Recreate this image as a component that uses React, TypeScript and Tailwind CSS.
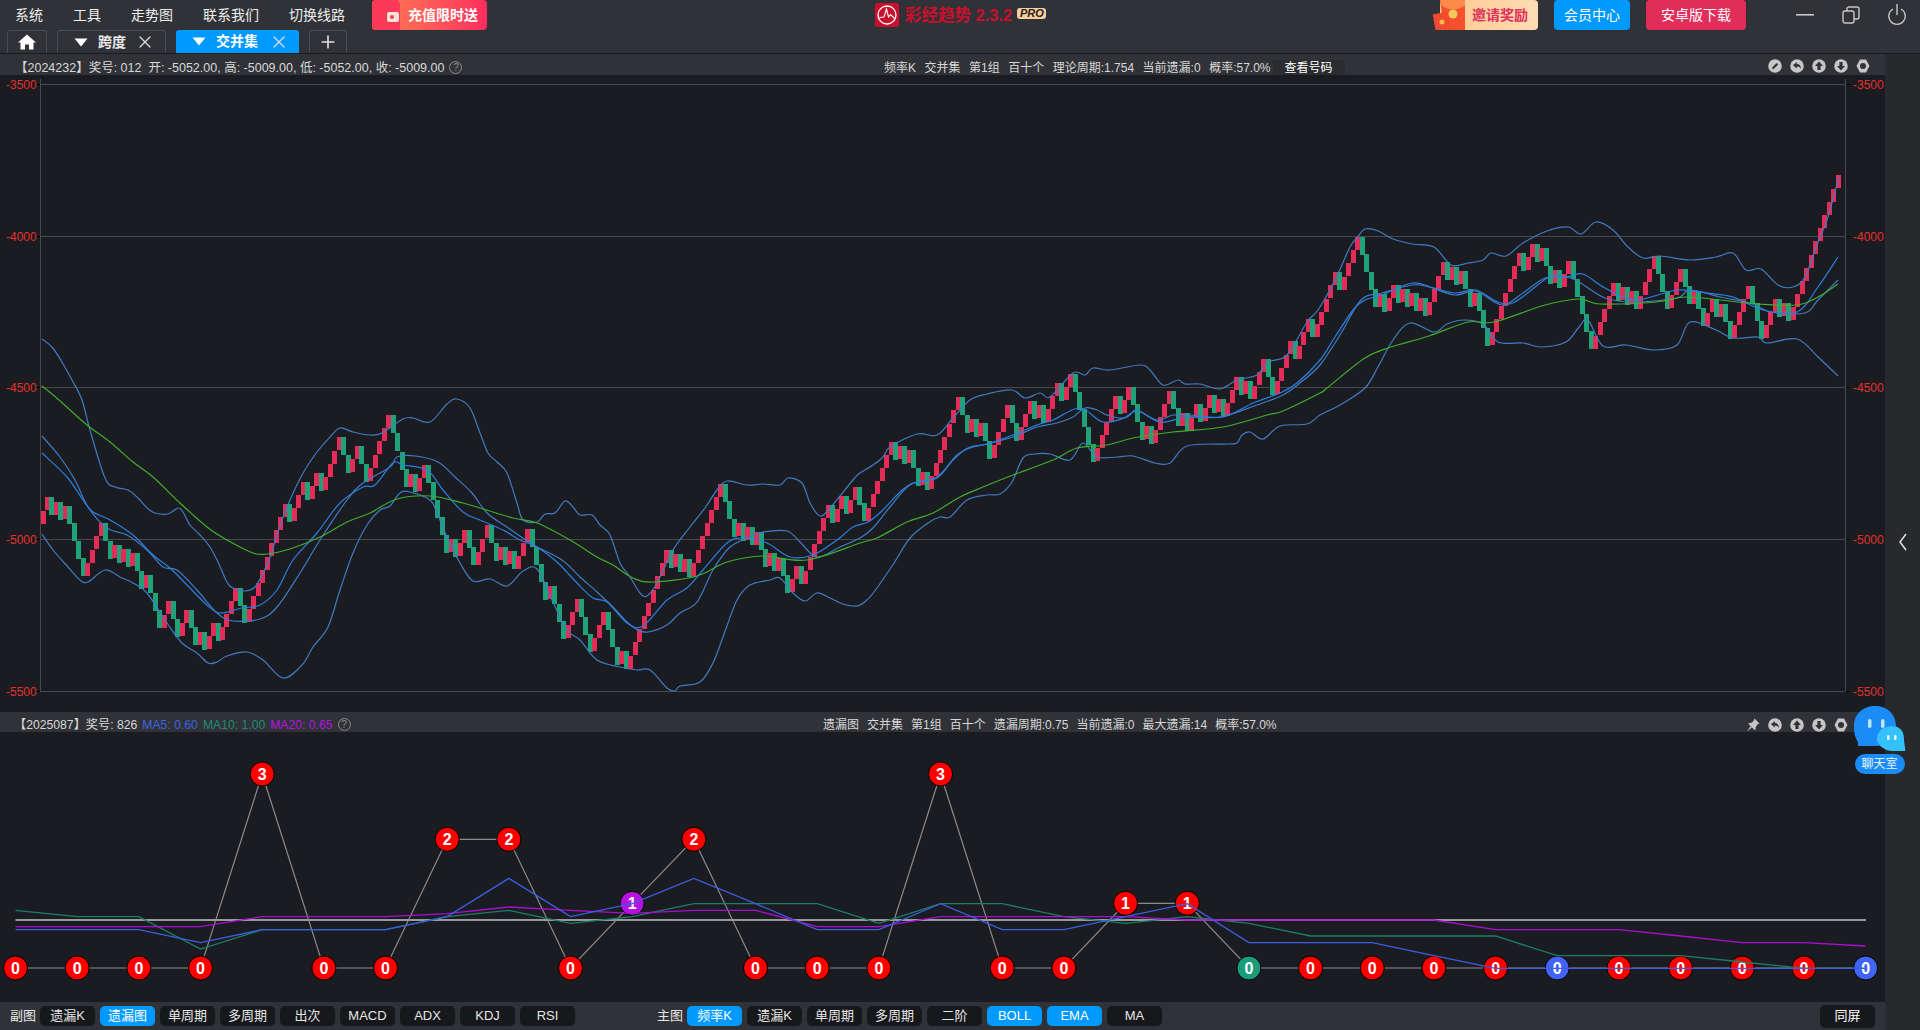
import React from "react";
import { X, Plus } from "lucide-react";

const UP = 13.2;
const DOWN = 17.5;

// candle walk, U = red box going up, D = green box going down
const walks: [number, string][] = [
  [523.7, "UUDUDUDDDD UUUUDDUDUD UDDUDDDUUD DUUDDUDUUD UUUUDDUUUU UUUUUDUUUD UUDUUUUDDU UDDUUUUUDD"],
  [451.7, "DDUDUUDDDD DUDUUDDUUU DDUDUDUUUD DDDUDDDUUU DDDUUUDDDU DUUUUUUUUU DUDUDUUUUU UUDDDUDUDU DDUDUDDUUD UUUUUUDUUD UUD"],
  [503.3, "DUUUUUUDUD UDDUDUUUUU UUDDUDUDDU UUUDDUUUDU DUUUDUUDDD DDUUUUUDUU DDDUDUUUUD DUDUUDUUDU DUUUDUDUUU DDUUUUDUUU DU"],
  [325, "UUUUDUUUU DDDD UDUUDUDUDUDUUUUDUDUDDUDDD UUUUUUU DUUDUDDUDUUDDDDD UUUUU DUDUD UUUU DDD UUU DD U DD UU D U DD UUUU DDD UUU D U D UUUUUUUUUUU"],
];

type Candle = { up: boolean; top: number; h: number };
const candles: Candle[] = [];
walks.forEach(([start, s]) => {
  let level = start;
  s.replace(/ /g, "").split("").forEach((c) => {
    if (c === "U") {
      candles.push({ up: true, top: level - UP, h: UP });
      level -= UP;
    } else {
      candles.push({ up: false, top: level, h: DOWN });
      level += DOWN;
    }
  });
});
const pitch = (1838 - 43) / (candles.length - 1);
const candleLeft = (i: number) => Math.round(43 - 2.5 + i * pitch);

// catmull-rom through the traced points so the bands don't look like straight pieces
const smooth = (line: string) => {
  const p = line.split(" ").map((s) => s.split(",").map(Number));
  let d = `M${p[0][0]} ${p[0][1]}`;
  for (let i = 0; i < p.length - 1; i++) {
    const a = p[Math.max(i - 1, 0)];
    const b = p[i];
    const c = p[i + 1];
    const e = p[Math.min(i + 2, p.length - 1)];
    const c1x = b[0] + (c[0] - a[0]) / 6;
    const c1y = b[1] + (c[1] - a[1]) / 6;
    const c2x = c[0] - (e[0] - b[0]) / 6;
    const c2y = c[1] - (e[1] - b[1]) / 6;
    d += ` C${c1x.toFixed(1)} ${c1y.toFixed(1)} ${c2x.toFixed(1)} ${c2y.toFixed(1)} ${c[0]} ${c[1]}`;
  }
  return d;
};

const upperBand =
  "42,339 52,347 62,362 72,380 82,400 90,430 105,478 115,487 128,490 138,498 147,508 155,513 168,514 178,508 183,512 190,525 200,535 210,547 218,562 227,582 233,588 245,591 255,587 263,573 270,558 277,535 287,507 302,475 317,452 330,437 340,428 353,432 370,435 382,433 403,419 413,418 430,422 447,404 457,399 470,408 480,433 488,453 497,462 507,473 517,503 523,520 537,522 545,514 555,513 565,501 573,507 580,515 592,515 600,525 610,535 620,563 630,577 640,593 647,596 657,583 673,550 690,527 705,508 717,490 727,481 747,485 763,484 780,485 788,478 802,483 810,503 820,516 830,508 853,480 860,473 873,465 883,457 890,447 917,434 937,435 953,418 970,400 987,394 1012,390 1025,398 1040,393 1050,397 1073,373 1085,375 1093,368 1110,370 1140,365 1150,370 1163,385 1178,380 1185,384 1200,384 1220,389 1237,380 1257,375 1268,362 1287,355 1307,322 1318,310 1335,280 1350,247 1357,238 1365,229 1378,231 1393,239 1412,244 1434,247 1451,265 1468,263 1483,260 1491,253 1506,256 1523,243 1547,231 1568,227 1581,234 1596,222 1613,230 1628,247 1643,258 1660,256 1690,260 1716,257 1733,253 1746,270 1761,269 1778,285 1793,287 1805,277 1818,242 1827,220 1839,177";
const lowerBand =
  "42,534 53,550 68,567 80,580 88,582 105,570 120,577 133,583 147,593 167,623 182,643 197,653 208,663 217,662 227,656 247,652 263,660 283,678 302,665 313,647 328,627 340,590 353,553 367,525 380,510 390,506 400,493 410,492 430,500 437,513 447,537 460,563 473,581 490,579 507,586 523,571 537,569 552,600 567,630 580,640 597,660 620,667 637,670 650,670 667,688 675,691 680,686 700,682 713,663 723,637 737,600 750,585 770,580 780,578 793,593 805,601 817,593 830,598 843,604 857,606 867,600 877,588 894,563 910,538 928,523 940,517 950,517 967,500 987,495 1000,494 1012,482 1023,458 1035,454 1050,454 1070,460 1083,443 1097,457 1117,457 1133,456 1155,463 1170,463 1187,446 1227,444 1237,443 1242,435 1250,432 1263,439 1280,426 1307,424 1320,415 1340,405 1365,388 1378,367 1393,340 1410,323 1434,332 1447,324 1464,320 1483,324 1498,342 1523,343 1541,347 1566,342 1579,327 1588,320 1603,346 1626,345 1654,350 1677,345 1690,322 1716,330 1733,338 1758,337 1767,343 1797,339 1818,357 1838,376";
const midA =
  "42,436 60,457 75,480 88,507 107,528 127,535 147,550 163,567 177,570 197,590 217,613 233,621 260,619 277,607 300,573 320,540 347,500 363,483 390,467 397,457 415,456 438,462 455,477 472,493 487,513 507,527 523,538 537,547 562,560 580,577 597,592 613,607 627,622 638,630 648,632 667,625 680,613 697,602 713,570 730,547 750,537 763,532 787,531 800,542 817,557 840,547 860,538 873,528 890,507 910,485 937,477 957,455 973,447 987,444 1013,437 1037,427 1057,423 1073,417 1085,408 1097,410 1107,415 1123,418 1137,411 1157,420 1173,415 1190,415 1220,417 1257,405 1283,395 1300,383 1320,365 1340,335 1361,300 1382,293 1412,285 1429,287 1455,295 1476,291 1502,305 1523,293 1545,278 1566,277 1579,282 1605,298 1635,302 1677,298 1690,290 1720,297 1750,303 1771,312 1805,313 1818,300 1838,280";
const midB =
  "42,453 67,477 83,500 93,512 110,520 133,535 153,555 170,568 187,585 207,605 220,613 242,608 260,605 277,590 293,560 317,533 340,503 363,487 375,485 393,463 403,465 427,470 443,490 463,512 480,520 503,530 520,540 537,547 557,562 577,583 593,598 607,602 627,623 643,626 667,600 687,588 703,570 727,543 743,538 767,543 790,557 813,555 837,540 853,527 868,522 883,510 900,492 913,483 937,478 953,460 968,448 987,444 1013,435 1037,425 1053,420 1080,408 1103,422 1127,417 1137,410 1160,422 1187,417 1223,417 1253,403 1280,393 1297,383 1320,360 1335,337 1353,310 1365,300 1382,295 1412,283 1434,288 1455,293 1476,290 1498,302 1515,302 1549,277 1566,277 1583,274 1605,288 1635,300 1677,290 1707,293 1733,297 1763,310 1797,312 1818,287 1838,257";
const greenLine =
  "42,386 59,400 87,425 110,442 133,462 153,477 180,503 207,527 227,540 253,553 267,554 290,549 320,537 347,522 370,513 397,499 430,496 463,503 480,508 513,518 537,523 570,540 597,557 613,565 633,578 653,582 697,576 727,562 763,556 807,560 860,543 877,538 907,522 933,513 960,497 983,487 1013,475 1053,460 1077,448 1107,445 1133,438 1173,432 1223,427 1267,415 1283,411 1320,393 1327,388 1365,358 1391,347 1429,336 1468,322 1494,322 1545,305 1579,299 1600,304 1656,302 1686,297 1720,300 1758,304 1797,305 1818,297 1838,284";

const grid = [
  { y: 84, label: "-3500" },
  { y: 236, label: "-4000" },
  { y: 387, label: "-4500" },
  { y: 539, label: "-5000" },
  { y: 691, label: "-5500" },
];

const nodeX = (i: number) => 15.5 + i * 61.67;
const levels = [968, 903.3, 839.3, 774];
const misses = [0, 0, 0, 0, 3, 0, 0, 2, 2, 0, 1, 2, 0, 0, 0, 3, 0, 0, 1, 1, 0, 0, 0, 0, 0, 0, 0, 0, 0, 0, 0];

// ma values read off the picture as offsets from y=700, times 3
const ma10 = [631, 650, 650, 747, 689, 689, 689, 650, 631, 670, 650, 611, 611, 611, 670, 611, 611, 650, 670, 650, 670, 708, 708, 708, 708, 767, 767, 767, 786, 805, 805];
const ma5 = [689, 689, 689, 728, 689, 689, 689, 650, 535, 650, 611, 535, 611, 689, 689, 611, 689, 689, 650, 611, 728, 728, 728, 767, 805, 805, 805, 805, 805, 805, 805];
const ma20 = [680, 680, 680, 680, 650, 650, 650, 641, 621, 631, 640, 631, 631, 680, 680, 650, 650, 650, 650, 660, 660, 660, 660, 660, 689, 689, 689, 708, 728, 728, 738];
const maPoints = (vals: number[]) => vals.map((v, i) => `${nodeX(i)},${700 + v / 3}`).join(" ");
const missPoints = misses.map((m, i) => `${nodeX(i)},${levels[m]}`).join(" ");

const nodeFill = (i: number, m: number) => {
  if (i === 25 || i === 30) return "#4264f5";
  if (i === 20) return "#1a9c78";
  if (m === 1 && i === 10) return "#b512e0";
  return "#ff0000";
};

function RoundIcon({ kind }: { kind: string }) {
  return (
    <svg width="14" height="14" viewBox="0 0 14 14">
      {kind === "hex" ? (
        <>
          <polygon points="4,0.5 10,0.5 13.5,7 10,13.5 4,13.5 0.5,7" fill="#c6c6c6" />
          <circle cx="7" cy="7" r="3" fill="#303237" />
        </>
      ) : (
        <>
          <circle cx="7" cy="7" r="6.8" fill="#c6c6c6" />
          {kind === "edit" && <path d="M4 10.2 L4.6 8 L8.6 4 L10.2 5.6 L6.2 9.6 Z" fill="#303237" />}
          {kind === "back" && <path d="M3 6.2 L6.8 3 V5 C9.6 5 11 7 11 10 C10 8.4 8.8 7.6 6.8 7.6 V9.6 Z" fill="#303237" />}
          {kind === "up" && <path d="M7 2.6 L11 7 H8.6 V11 H5.4 V7 H3 Z" fill="#303237" />}
          {kind === "down" && <path d="M7 11.4 L11 7 H8.6 V3 H5.4 V7 H3 Z" fill="#303237" />}
        </>
      )}
    </svg>
  );
}

function PinIcon() {
  return (
    <svg width="14" height="14" viewBox="0 0 14 14">
      <path d="M8.5 0.5 L13.5 5.5 L11.5 6.2 L9.5 9.8 L9.8 11.6 L8.6 12 L2 5.4 L6 4.4 L7.8 2.4 Z M4.4 8.2 L5.8 9.6 L1 13.6 Z" fill="#c6c6c6" />
    </svg>
  );
}

function HelpIcon() {
  return (
    <span className="w-[13px] h-[13px] rounded-full border border-[#8a8a8a] text-[#8a8a8a] text-[10px] leading-[11px] text-center">?</span>
  );
}

function Triangle() {
  return (
    <svg width="14" height="9" viewBox="0 0 14 9">
      <path d="M0.5 0.5 H13.5 L7 8.5 Z" fill="#ffffff" />
    </svg>
  );
}

function Tab({ label, active }: { label: string; active?: boolean }) {
  return (
    <div
      className={
        active
          ? "w-[123px] h-[23px] pl-[16px] flex items-center rounded-t-[3px] bg-[#0099ff] text-white font-bold text-[14px]"
          : "w-[109px] h-[23px] pl-[16px] flex items-center rounded-t-[3px] border border-b-0 border-[#4a4c50] text-[#e8e8e8] font-bold text-[14px]"
      }
    >
      <Triangle />
      <span className={active ? "ml-[10px] w-[53px]" : "ml-[10px] w-[37px]"}>{label}</span>
      <X size={20} strokeWidth={1.5} className="ml-[0px] text-[#dddddd]" />
    </div>
  );
}

function ToolButton({ label, active }: { label: string; active?: boolean }) {
  return (
    <div
      className={
        active
          ? "w-[55px] h-[20px] flex items-center justify-center rounded-[5px] bg-[#0099ff] text-white text-[13px]"
          : "w-[55px] h-[20px] flex items-center justify-center rounded-[5px] bg-[#17181b] text-[#e6e6e6] text-[13px]"
      }
    >
      {label}
    </div>
  );
}

function Logo() {
  return (
    <div className="flex items-start pt-[3px] w-[180px]">
      <svg width="24" height="24" viewBox="0 0 24 24" className="shrink-0">
        <rect width="24" height="24" rx="3" fill="#c8102e" />
        <circle cx="12" cy="12" r="9" fill="none" stroke="#fff" strokeWidth="1.3" />
        <path d="M4.5 14.5 L9 14 L11.5 6 L13.5 14 L15.5 11.5 L19.5 15.5" fill="none" stroke="#fff" strokeWidth="1.1" />
      </svg>
      <span className="ml-[6px] mt-[1px] text-[16.5px] leading-[22px] font-bold text-[#c8102e] whitespace-nowrap">彩经趋势 2.3.2</span>
      <span className="ml-[5px] mt-[5px] w-[29px] h-[11px] rounded-[3px] bg-[#f7cf9f] text-[#2a2118] text-[11px] leading-[11px] font-bold italic text-center">PRO</span>
    </div>
  );
}

function InviteIcon() {
  return (
    <svg width="34" height="30" viewBox="0 0 34 30" className="absolute left-[-7px] top-0">
      <path d="M7 0 H32 V30 H11 Z" fill="#f4502c" />
      <path d="M7 0 H32 V6 Q20 13 9 6 Z" fill="#ff8a4d" />
      <circle cx="20" cy="14" r="4.5" fill="#f6c65a" />
      <rect x="1" y="13" width="15" height="17" rx="1" fill="#f14a2f" transform="rotate(-10 8 21)" />
      <circle cx="9" cy="22" r="2.5" fill="#fbbf4a" />
    </svg>
  );
}

function ChatBubble() {
  return (
    <div className="absolute left-[1854px] top-[6px] w-[51px] flex flex-col items-center">
      <svg width="52" height="46" viewBox="0 0 52 46">
        <path d="M4 36 C0 30 0 24 0 20 C0 8 9 0 21 0 C33 0 42 8 42 20 C42 32 33 40 21 40 H4 Z" fill="#1b8cf5" />
        <rect x="14" y="13" width="3.5" height="9" rx="1.7" fill="#bfe2ff" />
        <rect x="27" y="13" width="3.5" height="9" rx="1.7" fill="#bfe2ff" />
        <path d="M33 21 C40 19 50 20 50 33 C50 37 52 45 51 45 H38 C31 45 23 39 23 33 C23 26 28 22 33 21 Z" fill="#35c1fb" />
        <rect x="33" y="29" width="2.5" height="5" rx="1.2" fill="#e8f8ff" />
        <rect x="40" y="29" width="2.5" height="5" rx="1.2" fill="#e8f8ff" />
      </svg>
      <div className="mt-[2px] w-[50px] h-[20px] rounded-full bg-[#1b8cf5] text-[#e8f4ff] text-[12px] leading-[20px] text-center">聊天室</div>
    </div>
  );
}

export default function App() {
  return (
    <div className="relative w-[1920px] h-[1030px] overflow-hidden bg-[#303237] text-[#e0e0e0] font-['Liberation_Sans','Noto_Sans_CJK_SC',sans-serif]">
      {/* title bar */}
      <div className="h-[54px] flex items-start border-b border-[#1a1b1e]">
        <div className="w-[875px]">
          <div className="h-[30px] pl-[15px] flex items-center gap-[30px] text-[14px] text-[#eeeeee]">
            <span>系统</span>
            <span>工具</span>
            <span>走势图</span>
            <span>联系我们</span>
            <span>切换线路</span>
            <div className="relative ml-[-3px] w-[115px] h-[30px] flex items-center justify-end pr-[9px] rounded-[4px] bg-gradient-to-r from-[#ff7a50] to-[#ff2a5f] text-white font-bold text-[14px]">
              <svg width="30" height="30" viewBox="0 0 30 30" className="absolute left-0 top-0">
                <path d="M4 0 H26 L28 4 V30 H4 Q0 30 0 26 V4 Q0 0 4 0 Z" fill="#fb3a58" />
                <rect x="15" y="12" width="12" height="10" rx="2" fill="#ffe2d6" />
                <circle cx="20" cy="17" r="2" fill="#fb3a58" />
              </svg>
              充值限时送
            </div>
          </div>
          <div className="h-[23px] pl-[7px] flex items-end gap-[10px]">
            <div className="w-[40px] h-[23px] flex items-center justify-center rounded-t-[3px] border border-b-0 border-[#4a4c50]">
              <svg width="18" height="16" viewBox="0 0 18 16">
                <path d="M9 0.5 L18 8.5 H15.5 V15.5 H11 V10.5 H7 V15.5 H2.5 V8.5 H0 Z" fill="#ffffff" />
              </svg>
            </div>
            <Tab label="跨度" />
            <Tab label="交并集" active />
            <div className="w-[38px] h-[23px] flex items-center justify-center rounded-t-[3px] border border-b-0 border-[#4a4c50]">
              <Plus size={20} strokeWidth={2} className="text-[#dddddd]" />
            </div>
          </div>
        </div>

        <Logo />

        <div className="ml-[385px] flex items-start">
          <div className="relative w-[98px] h-[30px] pl-[32px] flex items-center rounded-[4px] bg-gradient-to-r from-[#ffc890] to-[#ffdcb4] text-[#e0305a] font-bold text-[14px]">
            <InviteIcon />
            邀请奖励
          </div>
          <div className="ml-[16px] w-[76px] h-[30px] flex items-center justify-center rounded-[4px] bg-[#0099ff] text-white text-[14px]">会员中心</div>
          <div className="ml-[16px] w-[100px] h-[30px] flex items-center justify-center rounded-[4px] bg-[#e12d5a] text-white text-[14px]">安卓版下载</div>
          <div className="ml-[50px] h-[30px] flex items-center gap-[28px]">
            <svg width="18" height="18" viewBox="0 0 18 18">
              <rect y="8" width="18" height="1.6" fill="#c8c8c8" />
            </svg>
            <svg width="18" height="18" viewBox="0 0 18 18" fill="none" stroke="#c8c8c8" strokeWidth="1.4">
              <rect x="1" y="5" width="11" height="12" rx="2" />
              <path d="M5 5 V3 Q5 1 7 1 H15 Q17 1 17 3 V11 Q17 13 15 13 H12" />
            </svg>
            <svg width="18" height="22" viewBox="0 0 18 22" fill="none" stroke="#c8c8c8" strokeWidth="1.4">
              <path d="M5 5 A8.2 8.2 0 1 0 13 5" />
              <path d="M9 0 V11" />
            </svg>
          </div>
        </div>
      </div>

      <div className="flex">
        <div className="w-[1885px]">
          {/* main chart header */}
          <div className="h-[21px] pl-[15px] pr-[15px] flex items-center text-[12px] leading-[14px] text-[#d8d8d8] overflow-hidden">
            <div className="w-[869px] flex items-center gap-[5px] whitespace-nowrap pt-[6px] text-[12.5px]">
              <span>【2024232】奖号: 012 &nbsp;开: -5052.00, 高: -5009.00, 低: -5052.00, 收: -5009.00</span>
              <HelpIcon />
            </div>
            <div className="flex items-center gap-[8.5px] whitespace-nowrap pt-[6px]">
              <span>频率K</span>
              <span>交并集</span>
              <span>第1组</span>
              <span>百十个</span>
              <span>理论周期:1.754</span>
              <span>当前遗漏:0</span>
              <span>概率:57.0%</span>
            </div>
            <div className="ml-[2px] w-[72px] h-[15px] mt-[6px] bg-[#2a2c30] text-white text-center leading-[16px]">查看号码</div>
            <div className="ml-auto flex items-center gap-[8px] pt-[3px]">
              <RoundIcon kind="edit" />
              <RoundIcon kind="back" />
              <RoundIcon kind="up" />
              <RoundIcon kind="down" />
              <RoundIcon kind="hex" />
            </div>
          </div>

          {/* main chart */}
          <svg width="1885" height="637" viewBox="0 75 1885 637" className="block bg-[#1b1c21]">
            {grid.map((g) => (
              <g key={g.y}>
                <line x1="40" x2="1845" y1={g.y + 0.5} y2={g.y + 0.5} stroke="#47494d" />
                <line x1="36" x2="40" y1={g.y + 0.5} y2={g.y + 0.5} stroke="#000" />
                <line x1="1846" x2="1850" y1={g.y + 0.5} y2={g.y + 0.5} stroke="#000" />
                <text x="6" y={g.y + 4.5} fontSize="12" fill="#e5302d" fontFamily="Liberation Sans">{g.label}</text>
                <text x="1853" y={g.y + 4.5} fontSize="12" fill="#e5302d" fontFamily="Liberation Sans">{g.label}</text>
              </g>
            ))}
            <line x1="40.5" x2="40.5" y1="79" y2="691" stroke="#47494d" />
            <line x1="1845.5" x2="1845.5" y1="79" y2="691" stroke="#47494d" />
            <g shapeRendering="crispEdges">
              {candles.map((c, i) => (
                <rect
                  key={i}
                  x={candleLeft(i)}
                  y={Math.round(c.top)}
                  width="5"
                  height={Math.round(c.h)}
                  fill={c.up ? "#e52b57" : "#1fa277"}
                />
              ))}
            </g>
            <g fill="none" strokeWidth="1.2" strokeLinejoin="round">
              <path d={smooth(upperBand)} stroke="#3f7cc4" />
              <path d={smooth(lowerBand)} stroke="#3f7cc4" />
              <path d={smooth(midA)} stroke="#3f7cc4" />
              <path d={smooth(midB)} stroke="#2a7fe0" />
              <path d={smooth(greenLine)} stroke="#3fae2e" />
            </g>
          </svg>

          {/* sub chart header */}
          <div className="h-[20px] pt-[5px] pl-[14px] pr-[37px] flex items-center text-[12px] leading-[14px] text-[#d8d8d8] overflow-hidden">
            <div className="w-[809px] flex items-center gap-[5px] whitespace-nowrap text-[12.2px]">
              <span>【2025087】奖号: 826</span>
              <span className="text-[#3f62e0]">MA5: 0.60</span>
              <span className="text-[#1a8f6c]">MA10: 1.00</span>
              <span className="text-[#b512e0]">MA20: 0.65</span>
              <HelpIcon />
            </div>
            <div className="flex items-center gap-[8px] whitespace-nowrap">
              <span>遗漏图</span>
              <span>交并集</span>
              <span>第1组</span>
              <span>百十个</span>
              <span>遗漏周期:0.75</span>
              <span>当前遗漏:0</span>
              <span>最大遗漏:14</span>
              <span>概率:57.0%</span>
            </div>
            <div className="ml-auto flex items-center gap-[8px]">
              <PinIcon />
              <RoundIcon kind="back" />
              <RoundIcon kind="up" />
              <RoundIcon kind="down" />
              <RoundIcon kind="hex" />
            </div>
          </div>

          {/* sub chart */}
          <svg width="1885" height="270" viewBox="0 732 1885 270" className="block bg-[#1b1c21]">
            <line x1="15.5" x2="1866" y1="920" y2="920" stroke="#9a9a9a" strokeWidth="2" />
            <polyline points={missPoints} fill="none" stroke="#8c8c8c" strokeWidth="1.2" />
            {misses.map((m, i) => (
              <g key={i}>
                <circle cx={nodeX(i)} cy={levels[m]} r="12" fill={nodeFill(i, m)} stroke="#000" strokeWidth="1" />
                <text x={nodeX(i)} y={levels[m] + 6} textAnchor="middle" fontSize="16" fontWeight="bold" fill="#fff" fontFamily="Liberation Sans">{m}</text>
              </g>
            ))}
            <g fill="none" strokeWidth="1.3">
              <polyline points={maPoints(ma10)} stroke="#1a8064" />
              <polyline points={maPoints(ma20)} stroke="#a90fd0" />
              <polyline points={maPoints(ma5)} stroke="#3a5fe0" />
            </g>
          </svg>

          {/* bottom toolbar */}
          <div className="h-[28px] pl-[10px] flex items-center text-[13px] text-[#e6e6e6]">
            <span className="w-[30px]">副图</span>
            <div className="flex gap-[5px]">
              <ToolButton label="遗漏K" />
              <ToolButton label="遗漏图" active />
              <ToolButton label="单周期" />
              <ToolButton label="多周期" />
              <ToolButton label="出次" />
              <ToolButton label="MACD" />
              <ToolButton label="ADX" />
              <ToolButton label="KDJ" />
              <ToolButton label="RSI" />
            </div>
            <span className="ml-[82px] w-[30px]">主图</span>
            <div className="flex gap-[5px]">
              <ToolButton label="频率K" active />
              <ToolButton label="遗漏K" />
              <ToolButton label="单周期" />
              <ToolButton label="多周期" />
              <ToolButton label="二阶" />
              <ToolButton label="BOLL" active />
              <ToolButton label="EMA" active />
              <ToolButton label="MA" />
            </div>
            <div className="ml-auto mr-[10px] w-[55px] h-[23px] flex items-center justify-center rounded-[5px] bg-[#17181b] text-white text-[13px]">同屏</div>
          </div>
        </div>

        {/* collapsed side strip */}
        <div className="w-[35px] bg-[#27292d] flex items-center justify-center">
          <svg width="12" height="20" viewBox="0 0 12 20" fill="none" stroke="#e0e0e0" strokeWidth="1.5">
            <path d="M9 2 L3 10 L9 18" />
          </svg>
        </div>
      </div>

      <div className="absolute left-0 top-[700px] w-0 h-0">
        <ChatBubble />
      </div>
    </div>
  );
}
